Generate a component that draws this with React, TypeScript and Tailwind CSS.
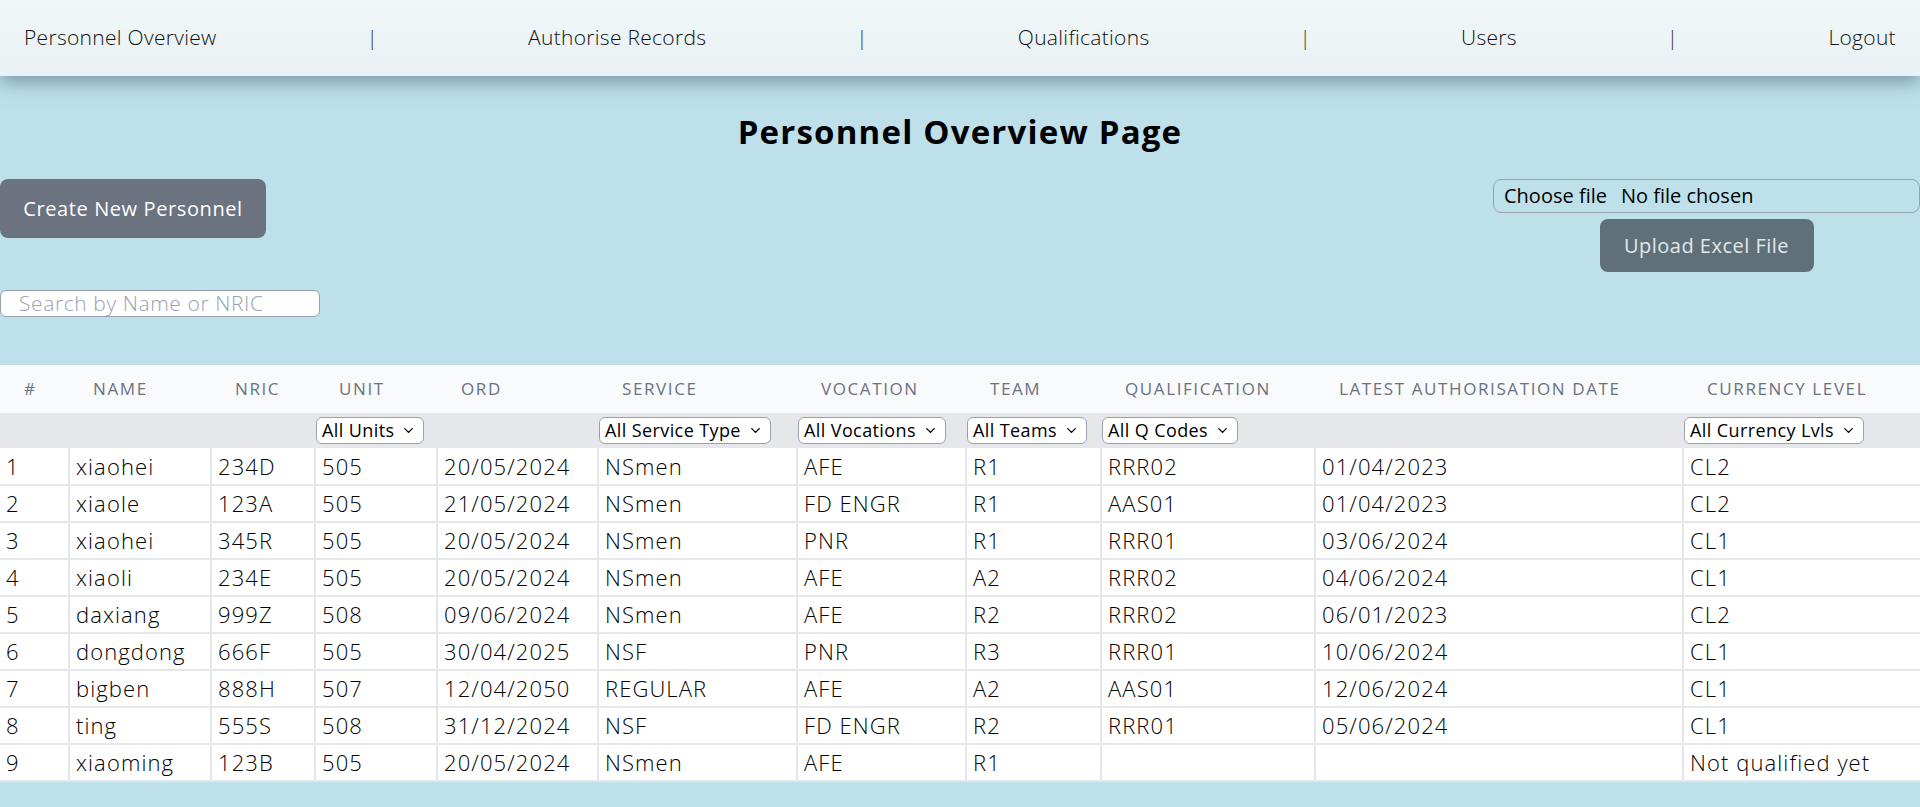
import { ChevronDown } from 'lucide-react'

const FONT = { fontFamily: '"Open Sans", "Noto Sans", sans-serif' }

const navItems = ['Personnel Overview', 'Authorise Records', 'Qualifications', 'Users', 'Logout']

// column widths taken from the reference table
const colWidths = [69, 142, 104, 122, 161, 199, 169, 135, 214, 368, 237]

const headers = [
  '#',
  'Name',
  'NRIC',
  'Unit',
  'ORD',
  'Service',
  'Vocation',
  'Team',
  'Qualification',
  'Latest Authorisation Date',
  'Currency Level',
]

interface Person {
  name: string
  nric: string
  unit: string
  ord: string
  service: string
  vocation: string
  team: string
  qual: string
  date: string
  level: string
}

const people: Person[] = [
  { name: 'xiaohei', nric: '234D', unit: '505', ord: '20/05/2024', service: 'NSmen', vocation: 'AFE', team: 'R1', qual: 'RRR02', date: '01/04/2023', level: 'CL2' },
  { name: 'xiaole', nric: '123A', unit: '505', ord: '21/05/2024', service: 'NSmen', vocation: 'FD ENGR', team: 'R1', qual: 'AAS01', date: '01/04/2023', level: 'CL2' },
  { name: 'xiaohei', nric: '345R', unit: '505', ord: '20/05/2024', service: 'NSmen', vocation: 'PNR', team: 'R1', qual: 'RRR01', date: '03/06/2024', level: 'CL1' },
  { name: 'xiaoli', nric: '234E', unit: '505', ord: '20/05/2024', service: 'NSmen', vocation: 'AFE', team: 'A2', qual: 'RRR02', date: '04/06/2024', level: 'CL1' },
  { name: 'daxiang', nric: '999Z', unit: '508', ord: '09/06/2024', service: 'NSmen', vocation: 'AFE', team: 'R2', qual: 'RRR02', date: '06/01/2023', level: 'CL2' },
  { name: 'dongdong', nric: '666F', unit: '505', ord: '30/04/2025', service: 'NSF', vocation: 'PNR', team: 'R3', qual: 'RRR01', date: '10/06/2024', level: 'CL1' },
  { name: 'bigben', nric: '888H', unit: '507', ord: '12/04/2050', service: 'REGULAR', vocation: 'AFE', team: 'A2', qual: 'AAS01', date: '12/06/2024', level: 'CL1' },
  { name: 'ting', nric: '555S', unit: '508', ord: '31/12/2024', service: 'NSF', vocation: 'FD ENGR', team: 'R2', qual: 'RRR01', date: '05/06/2024', level: 'CL1' },
  { name: 'xiaoming', nric: '123B', unit: '505', ord: '20/05/2024', service: 'NSmen', vocation: 'AFE', team: 'R1', qual: '', date: '', level: 'Not qualified yet' },
]

// filter dropdowns sit under these columns; null = empty cell
const filters: (string | null)[] = [
  null,
  null,
  null,
  'All Units',
  null,
  'All Service Type',
  'All Vocations',
  'All Teams',
  'All Q Codes',
  null,
  'All Currency Lvls',
]

function FilterSelect({ label }: { label: string }) {
  return (
    <div className="inline-flex h-[27px] items-center gap-[7px] rounded-md border border-gray-400 bg-white pl-[5px] pr-[7px] text-[18px] tracking-[0.4px] text-black">
      <span>{label}</span>
      <ChevronDown size={15} strokeWidth={2.2} />
    </div>
  )
}

export default function App() {
  return (
    <div className="min-h-[807px] bg-[#bee0eb] pb-10 text-black" style={FONT}>
      <header className="relative z-10 flex h-[76px] items-center justify-between bg-gradient-to-b from-[#f1f7f9] to-[#e9f1f4] px-6 text-[21px] font-light tracking-[0.3px] text-[#111] shadow-[0_6px_18px_rgba(60,90,105,0.55)]">
        {navItems.map((item, i) => (
          <div key={item} className="contents">
            {i > 0 && <span className="text-[#333]">|</span>}
            <span>{item}</span>
          </div>
        ))}
      </header>

      <h1 className="mt-[36px] h-[40px] text-center text-[33px] font-bold leading-[40px] tracking-[1.2px]">
        Personnel Overview Page
      </h1>

      <div className="mt-[27px] flex items-start justify-between">
        <button className="h-[59px] w-[266px] rounded-lg bg-[#6b7280] text-[20px] tracking-[0.6px] text-white">
          Create New Personnel
        </button>
        <div className="flex w-[427px] flex-col items-center gap-[6px]">
          <div className="flex h-[34px] w-full items-center rounded-lg border border-gray-400 pl-[10px] text-[20px] text-black">
            <span>Choose file</span>
            <span className="ml-[14px]">No file chosen</span>
          </div>
          <button className="h-[53px] w-[214px] rounded-lg bg-[#607078] text-[20px] tracking-[0.5px] text-[#e2e8ea]">
            Upload Excel File
          </button>
        </div>
      </div>

      <div className="mt-[18px] flex h-[27px] w-[320px] items-center rounded-md border border-gray-400 bg-white pl-[18px] text-[21px] font-light tracking-[0.6px] text-gray-400">
        Search by Name or NRIC
      </div>

      <table className="mt-[48px] w-full table-fixed border-collapse bg-white">
        <colgroup>
          {colWidths.map((w, i) => (
            <col key={i} style={{ width: w }} />
          ))}
        </colgroup>
        <thead>
          <tr className="h-[48px] bg-gray-50">
            {headers.map((h) => (
              <th
                key={h}
                className="px-6 text-left text-[17px] font-normal uppercase tracking-[1.6px] whitespace-nowrap text-gray-500"
              >
                {h}
              </th>
            ))}
          </tr>
          <tr className="h-[35px] bg-gray-200">
            {filters.map((f, i) => (
              <th key={i} className="p-0 pl-px text-left font-normal">
                {f && <FilterSelect label={f} />}
              </th>
            ))}
          </tr>
        </thead>
        <tbody>
          {people.map((p, i) => (
            <tr key={i} className="h-[37px] text-[22px] font-light tracking-[1.1px] text-black">
              {[String(i + 1), p.name, p.nric, p.unit, p.ord, p.service, p.vocation, p.team, p.qual, p.date, p.level].map(
                (v, j) => (
                  <td
                    key={j}
                    className={`border-b-2 border-gray-200 px-[6px] whitespace-nowrap ${j > 0 ? 'border-l-2' : ''}`}
                  >
                    {v}
                  </td>
                ),
              )}
            </tr>
          ))}
        </tbody>
      </table>
    </div>
  )
}
